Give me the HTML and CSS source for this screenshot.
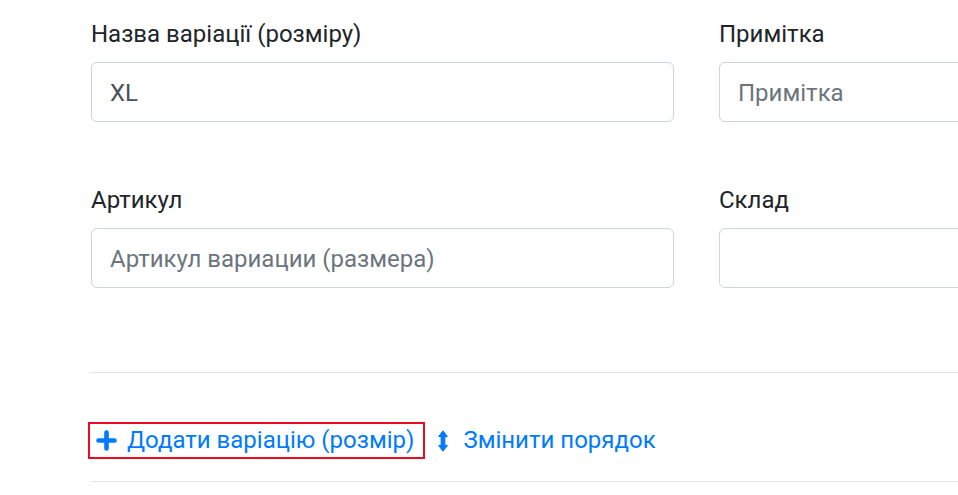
FILE: index.html
```html
<!DOCTYPE html>
<html lang="uk">
<head>
    <meta charset="UTF-8">
    <meta name="viewport" content="width=device-width, initial-scale=1.0">
    <title>Варіації товару</title>
    <link rel="stylesheet" href="styles.css">
</head>
<body>

    <div class="variation-form">
        <!-- Назва та примітка -->
        <div class="form-row">
            <div class="form-group">
                <label for="variationName">Назва варіації (розміру)</label>
                <input type="text" id="variationName" class="form-control" value="XL">
            </div>
            <div class="form-group">
                <label for="variationNote">Примітка</label>
                <input type="text" id="variationNote" class="form-control" placeholder="Примітка">
            </div>
        </div>

        <!-- Артикул та склад -->
        <div class="form-row">
            <div class="form-group">
                <label for="variationSku">Артикул</label>
                <input type="text" id="variationSku" class="form-control" placeholder="Артикул вариации (размера)">
            </div>
            <div class="form-group">
                <label for="variationStock">Склад</label>
                <input type="text" id="variationStock" class="form-control">
            </div>
        </div>

        <hr class="divider">

        <div class="actions">
            <a href="#" class="action-link action-link--selected">
                <svg class="icon icon-plus" width="21" height="21" viewBox="0 0 21 21">
                    <path d="M10.5 2.5V18.5M2.5 10.5H18.5" stroke="currentColor" stroke-width="4.6" stroke-linecap="round" fill="none"/>
                </svg>
                Додати варіацію (розмір)
            </a>
            <a href="#" class="action-link">
                <svg class="icon icon-sort" width="10" height="22" viewBox="0 0 10 22">
                    <path d="M5 0.8L9.4 6.6H6.9V15.4H9.4L5 21.2L0.6 15.4H3.1V6.6H0.6Z" fill="currentColor" stroke="currentColor" stroke-width="1" stroke-linejoin="round"/>
                </svg>
                Змінити порядок
            </a>
        </div>

        <hr class="divider">
    </div>

</body>
</html>
```

FILE: styles.css
```css
body {
    margin: 0;
    font-family: Roboto, "Liberation Sans", Arial, sans-serif;
    color: #212529;
    background: #fff;
    overflow: hidden;
}

.variation-form {
    width: 1211px;
    padding: 16px 0 0 91px;
}

.form-row {
    display: grid;
    grid-template-columns: 583px 583px;
    column-gap: 45px;
    margin-bottom: 60px;
}

.form-group label {
    display: block;
    font-size: 24px;
    line-height: 36px;
    margin-bottom: 10px;
}

.form-control {
    display: block;
    box-sizing: border-box;
    width: 100%;
    height: 60px;
    padding: 1px 18px 0 18px;
    font-family: inherit;
    font-size: 24px;
    color: #495057;
    background: #fff;
    border: 1px solid #ced4da;
    border-radius: 6px;
    outline: none;
}

.form-control::placeholder {
    color: #6c757d;
    opacity: 1;
}

.divider {
    margin: 0;
    border: 0;
    border-top: 1px solid #e2e3e5;
}

.form-row + .divider {
    margin-top: 84px;
}

.actions {
    display: flex;
    align-items: center;
    gap: 13px;
    margin: 49px 0 22px -3px;
}

.action-link {
    display: flex;
    align-items: center;
    gap: 10px;
    font-size: 24px;
    line-height: 33px;
    color: #007bff;
    text-decoration: none;
}

.action-link--selected {
    border: 2px solid #ec0c22;
    padding: 0 9px 0 6px;
}

.icon-sort {
    margin-right: 5px;
}

.icon {
    flex-shrink: 0;
}
```
